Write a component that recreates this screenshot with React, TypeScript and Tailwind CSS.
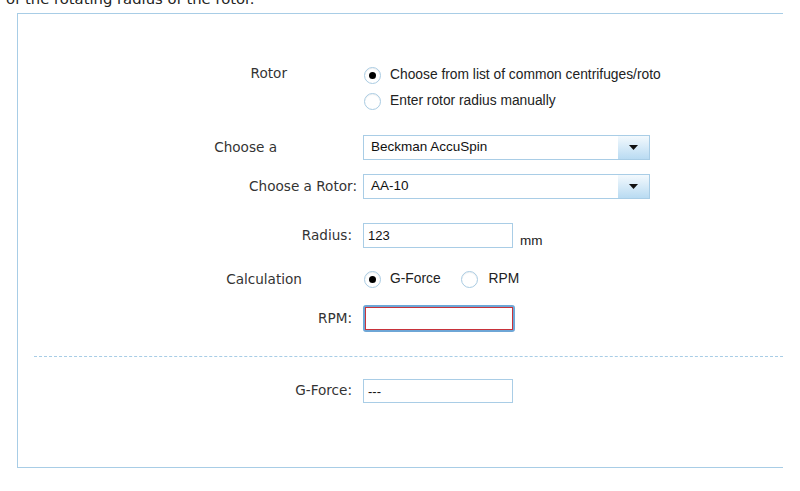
import React from "react";

const labelCls =
  "w-[339px] shrink-0 text-right text-[13.6px] leading-[17px] text-[#333] [font-family:'DejaVu_Sans',Verdana,sans-serif]";
const ctlFont = "[font-family:'Liberation_Sans',Arial,sans-serif]";

function Radio({ checked }: { checked?: boolean }) {
  return (
    <span className="w-[17px] h-[17px] rounded-full border border-[#a9cbe2] bg-white flex items-center justify-center shadow-[inset_0_1px_1px_rgba(0,0,0,0.06)]">
      {checked && <span className="w-[7px] h-[7px] rounded-full bg-black" />}
    </span>
  );
}

function Select({ value }: { value: string }) {
  return (
    <div className="w-[287px] h-[25px] border border-[#a9cde6] flex bg-white">
      <div className={`flex-1 flex items-center pl-[7px] text-[13.5px] text-[#111] ${ctlFont}`}>{value}</div>
      <div className="w-[31px] h-full bg-gradient-to-b from-[#f3f9fd] to-[#b9dbf2] flex items-center justify-center">
        <svg width="9" height="5" viewBox="0 0 9 5">
          <path d="M0 0 H9 L4.5 5 Z" fill="#111" />
        </svg>
      </div>
    </div>
  );
}

export default function App() {
  return (
    <div className="w-[800px] h-[491px] bg-white overflow-hidden relative">
      <div className="text-[14.8px] text-[#222] pl-[6px] -mt-[10px] leading-[18px] [font-family:'DejaVu_Sans',Verdana,sans-serif]">
        of the rotating radius of the rotor.
      </div>
      <div className="ml-[17px] mt-[5px] w-[766px] h-[455px] border-l border-t border-b border-[#a8cde6] flex flex-col">
        {/* Rotor */}
        <div className="flex mt-[53px]">
          <div className={`${labelCls} pr-[70px] -mt-[2px]`}>Rotor</div>
          <div className={`ml-[7px] flex flex-col gap-[9px] text-[13.8px] text-[#222] ${ctlFont}`}>
            <div className="flex items-center gap-[9px] h-[17px]">
              <Radio checked />
              <span>Choose from list of common centrifuges/roto</span>
            </div>
            <div className="flex items-center gap-[9px] h-[17px]">
              <Radio />
              <span>Enter rotor radius manually</span>
            </div>
          </div>
        </div>
        {/* Choose a */}
        <div className="flex items-center mt-[25px]">
          <div className={`${labelCls} pr-[80px]`}>Choose a</div>
          <div className="ml-[6px]">
            <Select value="Beckman AccuSpin" />
          </div>
        </div>
        {/* Choose a Rotor */}
        <div className="flex items-center mt-[14px]">
          <div className={labelCls}>Choose a Rotor:</div>
          <div className="ml-[6px]">
            <Select value="AA-10" />
          </div>
        </div>
        {/* Radius */}
        <div className="flex items-center mt-[24px]">
          <div className={`${labelCls} pr-[5px]`}>Radius:</div>
          <div className="ml-[6px] flex items-end">
            <div className={`w-[150px] h-[25px] border border-[#a9cde6] pl-[4px] pt-[2px] text-[13px] text-[#111] ${ctlFont}`}>
              123
            </div>
            <span className={`ml-[7px] mb-[-3px] text-[13.5px] text-[#222] ${ctlFont}`}>mm</span>
          </div>
        </div>
        {/* Calculation */}
        <div className="flex items-center mt-[21px]">
          <div className={`${labelCls} pr-[55px]`}>Calculation</div>
          <div className={`ml-[7px] flex items-center text-[13.8px] text-[#222] ${ctlFont}`}>
            <Radio checked />
            <span className="ml-[9px]">G-Force</span>
            <span className="ml-[20px]">
              <Radio />
            </span>
            <span className="ml-[11px]">RPM</span>
          </div>
        </div>
        {/* RPM */}
        <div className="flex items-center mt-[15px]">
          <div className={`${labelCls} pr-[5px]`}>RPM:</div>
          <div className="ml-[6px] w-[152px] h-[27px] rounded-[3px] border-2 border-[#6ea6d6] p-0">
            <div className="w-full h-full border border-[#c8323a] bg-white" />
          </div>
        </div>
        {/* dashed */}
        <div className="mt-[24px] ml-[16px] border-t border-dashed border-[#a8cde6]" />
        {/* G-Force */}
        <div className="flex items-center mt-[22px]">
          <div className={`${labelCls} pr-[5px]`}>G-Force:</div>
          <div className={`ml-[6px] w-[150px] h-[24px] border border-[#a9cde6] pl-[4px] pt-[2px] text-[13px] text-[#111] ${ctlFont}`}>
            ---
          </div>
        </div>
      </div>
    </div>
  );
}
